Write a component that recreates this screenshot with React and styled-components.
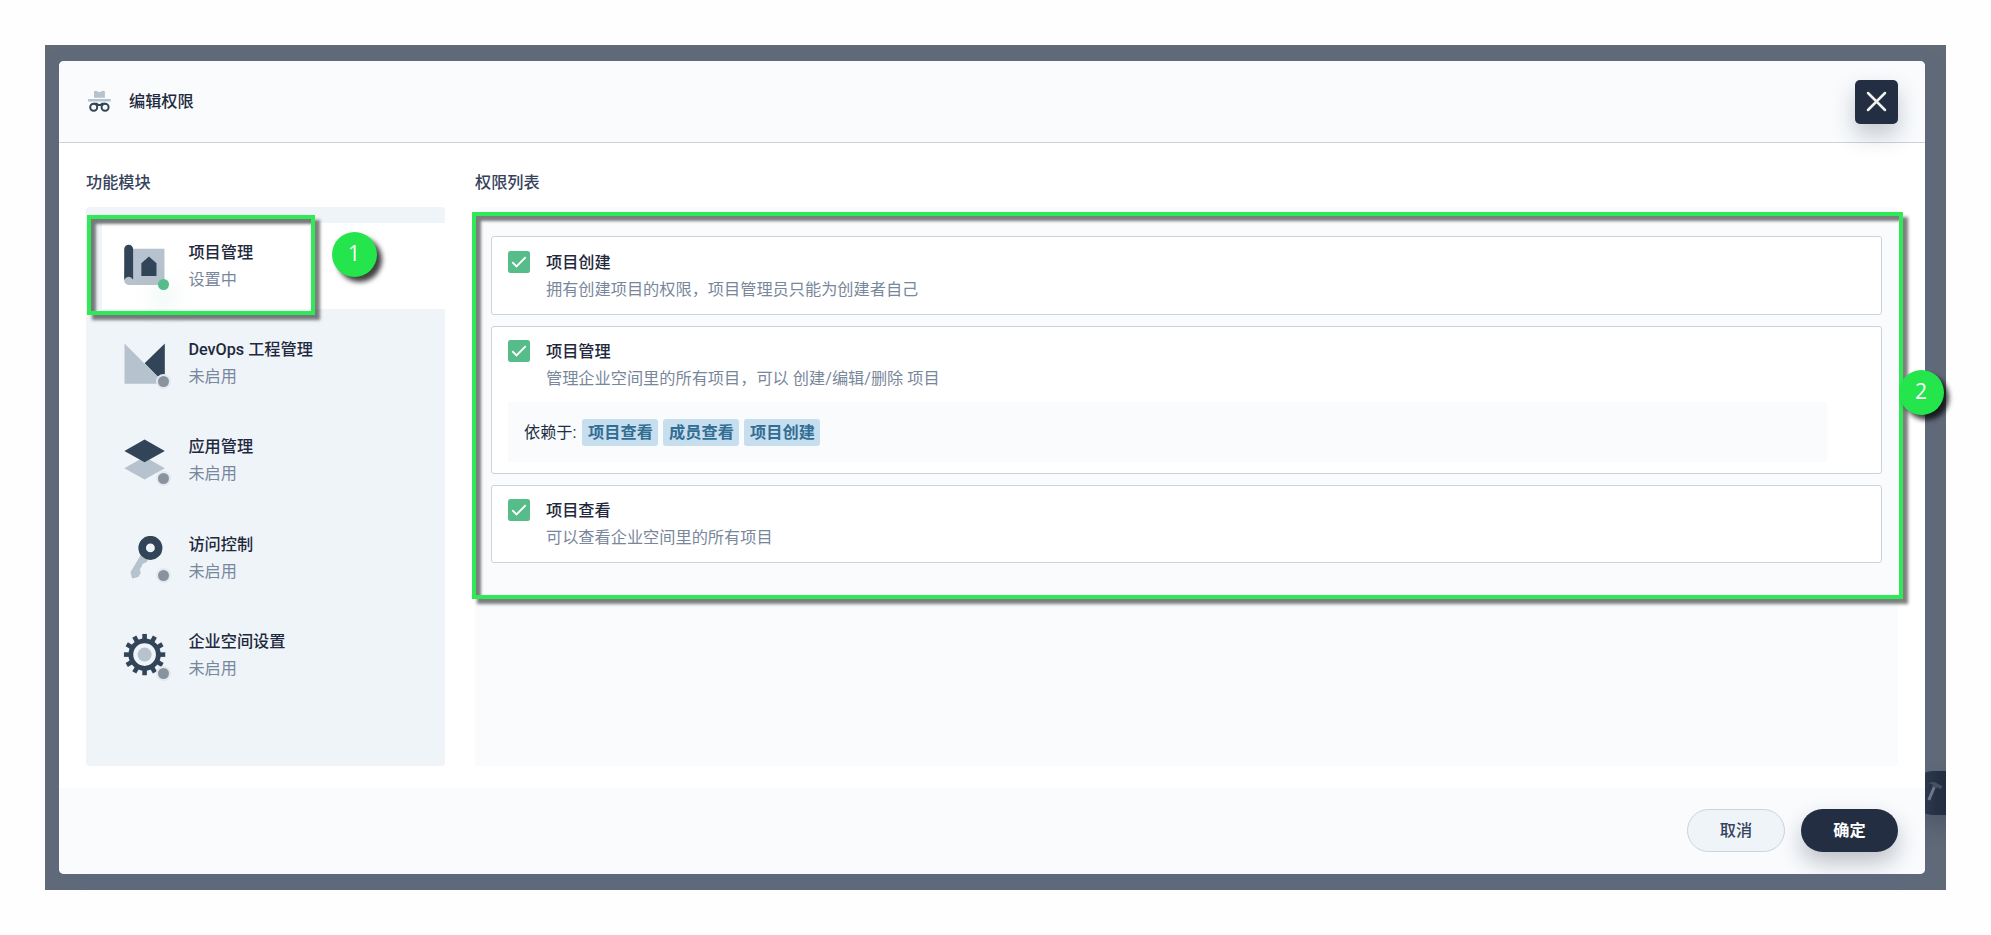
import React from "react";
import styled, { createGlobalStyle } from "styled-components";

const GlobalStyle = createGlobalStyle`
  *, *::before, *::after { box-sizing: border-box; }
  body {
    margin: 0;
    background: #fefefe;
    color: #242e42;
    font-family: Roboto, "Noto Sans CJK SC", sans-serif;
    font-size: 16.2px;
    line-height: 27px;
  }
`;

const DARK = "#324558";
const LIGHT = "#b6c2cd";

const Page = styled.main`
  position: relative;
  width: 1991px;
  height: 935px;
  padding: 45px;
  overflow: hidden;
`;

const Backdrop = styled.div`
  position: relative;
  width: 1901px;
  height: 845px;
  padding: 16px 21px 16px 14px;
  background: #616a78;
  overflow: hidden;
`;

const Modal = styled.section`
  position: relative;
  display: flex;
  flex-direction: column;
  width: 100%;
  height: 100%;
  border-radius: 5px;
  background: #fff;
  box-shadow: 0 11px 22px rgba(88, 102, 134, 0.4);
  overflow: hidden;
`;

const Header = styled.header`
  display: flex;
  align-items: center;
  flex: 0 0 82px;
  padding: 0 27px;
  background: #f9fbfd;
  border-bottom: 1px solid #ccd3db;
`;

const HeaderIcon = styled.svg`
  width: 27px;
  height: 27px;
  margin-right: 16px;
`;

const HeaderTitle = styled.h1`
  flex: 1;
  margin: 0;
  font-size: 16.2px;
  font-weight: 500;
  color: #1f293d;
`;

const CloseButton = styled.button`
  display: flex;
  align-items: center;
  justify-content: center;
  width: 43px;
  height: 44px;
  padding: 0;
  border: 0;
  border-radius: 5px;
  background: #242e42;
  box-shadow: 0 11px 22px rgba(36, 46, 66, 0.25);
`;

const Content = styled.div`
  display: flex;
  flex: 1;
  gap: 30px;
  padding: 26px 27px 22px;
`;

const Column = styled.div`
  display: flex;
  flex-direction: column;
  flex: ${(p) => (p.$width ? `0 0 ${p.$width}px` : "1")};
`;

const ColumnTitle = styled.h2`
  margin: 0 0 11px;
  font-size: 16.2px;
  font-weight: 500;
  color: #36435c;
`;

const ModuleList = styled.nav`
  display: flex;
  flex-direction: column;
  flex: 1;
  gap: 10.8px;
  padding: 15.8px 0 0 16px;
  border-radius: 4px;
  background: #eff4f9;
`;

const ModuleItem = styled.div`
  display: flex;
  align-items: center;
  height: 86.4px;
  padding-left: 21.3px;
  background: ${(p) => (p.$active ? "#fff" : "transparent")};
`;

const ModuleIcon = styled.div`
  position: relative;
  width: 43.2px;
  height: 43.2px;
  margin-right: 21.9px;

  svg { display: block; width: 100%; height: 100%; }
`;

const StatusDot = styled.i`
  position: absolute;
  left: 35px;
  top: 34.4px;
  width: 11px;
  height: 11px;
  border-radius: 50%;
  background: ${(p) => (p.$active ? "#55bc8a" : "#88939e")};
  box-shadow: ${(p) =>
    p.$active ? "0 11px 22px rgba(85, 188, 138, 0.5)" : "0 0 0 2px #e3e9ef"};
`;

const Name = styled.div`
  font-weight: 500;
  color: #1f293d;
`;

const Note = styled.div`
  color: #79879c;
  font-weight: 400;
`;

const PermissionPanel = styled.div`
  display: flex;
  flex-direction: column;
  flex: 1;
  gap: 11px;
  padding: 29px 16px;
  border-radius: 4px;
  background: #f9fbfd;
`;

const Card = styled.article`
  height: ${(p) => p.$height}px;
  padding: ${(p) => p.$top}px 54px 0 16px;
  border: 1px solid #ccd3db;
  border-radius: 3px;
  background: #fff;
`;

const CardRow = styled.div`
  display: flex;
  gap: 16px;
`;

const Checkbox = styled.span`
  display: flex;
  flex: 0 0 22px;
  height: 22px;
  align-items: center;
  justify-content: center;
  border-radius: 2.5px;
  background: #55bc8a;
`;

const CardText = styled.div`
  margin: -2px 0 -1px;
`;

const Dependencies = styled.div`
  display: flex;
  align-items: center;
  gap: 5px;
  height: 60px;
  margin-top: 11px;
  padding-left: 16px;
  background: #f9fbfd;
`;

const DependencyLabel = styled.span`
  margin-right: 1px;
`;

const Tag = styled.span`
  width: 76px;
  height: 27px;
  border-radius: 3px;
  background: #c7deef;
  color: #326e93;
  font-weight: 700;
  text-align: center;
`;

const Footer = styled.footer`
  display: flex;
  justify-content: flex-end;
  gap: 16px;
  flex: 0 0 86px;
  padding: 21px 27px 0;
  background: #f9fbfd;
`;

const Button = styled.button`
  width: ${(p) => (p.$primary ? 97 : 98)}px;
  height: 43px;
  padding: 0;
  border: ${(p) => (p.$primary ? "0" : "1px solid #ccd3db")};
  border-radius: 22px;
  background: ${(p) => (p.$primary ? "#242e42" : "#eff4f9")};
  color: ${(p) => (p.$primary ? "#fff" : "#36435c")};
  box-shadow: ${(p) => (p.$primary ? "0 11px 22px rgba(36, 46, 66, 0.28)" : "none")};
  font: inherit;
  font-weight: ${(p) => (p.$primary ? 700 : 500)};
`;

const ToolboxButton = styled.div`
  position: absolute;
  left: 1866px;
  top: 726px;
  width: 70px;
  height: 44px;
  padding: 9px 0 0 15px;
  border-radius: 22px;
  background: #242e42;
  box-shadow: 0 11px 22px rgba(36, 46, 66, 0.3);
`;

const Highlight = styled.div`
  position: absolute;
  left: ${(p) => p.$x}px;
  top: ${(p) => p.$y}px;
  width: ${(p) => p.$w}px;
  height: ${(p) => p.$h}px;
  border: 4px solid #2fe957;
  box-shadow:
    5px 5px 3px rgba(0, 0, 0, 0.5),
    inset 5px 5px 3px rgba(0, 0, 0, 0.5);
  pointer-events: none;
`;

const Marker = styled.div`
  position: absolute;
  left: ${(p) => p.$x}px;
  top: ${(p) => p.$y}px;
  width: 45px;
  height: 45px;
  border-radius: 50%;
  background: #24e54c;
  box-shadow: 5px 5px 5px rgba(0, 0, 0, 0.75);
  color: #fff;
  font: 400 21px/43px "Open Sans", "Noto Sans", sans-serif;
  text-align: center;
`;

const ProjectIcon = () => (
  <svg viewBox="0 0 32 32">
    <path fill={LIGHT} d="M4 3.6H30.7V30.3H4.2A3.3 3.3 0 0 1 .9 27V20z" />
    <path fill={DARK} d="M.9 3.8a3.3 3.3 0 0 1 6.6 0V26.4Q6.2 24.2 4.2 24.2T.9 26.4z" />
    <path fill={DARK} d="M19.2 9.2l5.6 5.1v9.4H13.6v-9.4z" />
  </svg>
);

const DevOpsIcon = () => (
  <svg viewBox="0 0 32 32">
    <path fill={DARK} d="M31 1.1V31L16 15.7z" />
    <path fill={LIGHT} d="M1.1 1.1L30.8 30.9H1.1z" />
  </svg>
);

const AppIcon = () => (
  <svg viewBox="0 0 32 32">
    <path fill={LIGHT} d="M16 13.2l15 8.4-15 8.4-15-8.4z" />
    <path fill={DARK} d="M16 .4l15 8.4-15 8.5L1 8.8z" />
  </svg>
);

const KeyIcon = () => (
  <svg viewBox="0 0 32 32">
    <path
      fill={LIGHT}
      d="M13.2 14L5.6 26.6L6.7 31.4L11.3 30.3L13.1 27.6L12.5 24.4L14 22.3L14.4 20.8L17.6 19.2L19.5 16z"
    />
    <circle cx="20.3" cy="8.8" r="6.1" fill="none" stroke={DARK} strokeWidth="5.6" />
  </svg>
);

const GearIcon = () => (
  <svg viewBox="0 0 32 32">
    {Array.from({ length: 12 }, (_, i) => (
      <rect
        key={i}
        x="14.3"
        y=".7"
        width="3.4"
        height="5"
        fill={DARK}
        transform={`rotate(${i * 30} 16 16)`}
      />
    ))}
    <circle cx="16" cy="16" r="10.2" fill="none" stroke={DARK} strokeWidth="3.6" />
    <circle cx="16" cy="16" r="5.2" fill={LIGHT} />
  </svg>
);

const modules = [
  { name: "项目管理", status: "设置中", Icon: ProjectIcon, active: true },
  { name: "DevOps 工程管理", status: "未启用", Icon: DevOpsIcon },
  { name: "应用管理", status: "未启用", Icon: AppIcon },
  { name: "访问控制", status: "未启用", Icon: KeyIcon },
  { name: "企业空间设置", status: "未启用", Icon: GearIcon },
];

const permissions = [
  { name: "项目创建", note: "拥有创建项目的权限，项目管理员只能为创建者自己", height: 79, top: 14 },
  {
    name: "项目管理",
    note: "管理企业空间里的所有项目，可以 创建/编辑/删除 项目",
    height: 148,
    top: 13,
    deps: ["项目查看", "成员查看", "项目创建"],
  },
  { name: "项目查看", note: "可以查看企业空间里的所有项目", height: 78, top: 13 },
];

export default function App() {
  return (
    <Page>
      <GlobalStyle />
      <Backdrop>
        <ToolboxButton>
          <svg width="18" height="24" viewBox="0 0 18 24">
            <path d="M8.5 6.5L2.8 20" stroke="#717c88" strokeWidth="3" />
            <path
              d="M2.6 3.4Q7 .6 10.8 3.2L16.4 6.2L14.4 9.2L11.6 7.6L9.6 8.3L6.4 6.4L6.6 4z"
              fill="#455162"
            />
          </svg>
        </ToolboxButton>
        <Modal>
          <Header>
            <HeaderIcon viewBox="0 0 27 27">
              <path fill={LIGHT} d="M8 3.2l2-.4 3.3 1.4 3.6-1.4 2 .4v6.6H8zM2 11h22.7v2.5H2z" />
              <g fill="none" stroke={DARK} strokeWidth="2">
                <circle cx="7.7" cy="19.2" r="3.5" />
                <circle cx="19.1" cy="19.2" r="3.5" />
                <path d="M7.7 15.7h3L12.4 17h2l1.7-1.3h3" />
              </g>
            </HeaderIcon>
            <HeaderTitle>编辑权限</HeaderTitle>
            <CloseButton aria-label="关闭">
              <svg width="21" height="21" viewBox="0 0 21 21">
                <path
                  d="M2 2l17 17M19 2L2 19"
                  stroke="#eef1ee"
                  strokeWidth="2.5"
                  strokeLinecap="round"
                />
              </svg>
            </CloseButton>
          </Header>
          <Content>
            <Column $width={359}>
              <ColumnTitle>功能模块</ColumnTitle>
              <ModuleList>
                {modules.map(({ name, status, Icon, active }) => (
                  <ModuleItem key={name} $active={active}>
                    <ModuleIcon>
                      <Icon />
                      <StatusDot $active={active} />
                    </ModuleIcon>
                    <div>
                      <Name>{name}</Name>
                      <Note>{status}</Note>
                    </div>
                  </ModuleItem>
                ))}
              </ModuleList>
            </Column>
            <Column>
              <ColumnTitle>权限列表</ColumnTitle>
              <PermissionPanel>
                {permissions.map((p) => (
                  <Card key={p.name} $height={p.height} $top={p.top}>
                    <CardRow>
                      <Checkbox>
                        <svg width="16" height="16" viewBox="0 0 16 16">
                          <path d="M1.3 8.2l4.2 4.3 9.2-9.3" fill="none" stroke="#fff" strokeWidth="1.9" />
                        </svg>
                      </Checkbox>
                      <CardText>
                        <Name>{p.name}</Name>
                        <Note>{p.note}</Note>
                      </CardText>
                    </CardRow>
                    {p.deps && (
                      <Dependencies>
                        <DependencyLabel>依赖于:</DependencyLabel>
                        {p.deps.map((d) => (
                          <Tag key={d}>{d}</Tag>
                        ))}
                      </Dependencies>
                    )}
                  </Card>
                ))}
              </PermissionPanel>
            </Column>
          </Content>
          <Footer>
            <Button>取消</Button>
            <Button $primary>确定</Button>
          </Footer>
        </Modal>
      </Backdrop>
      <Highlight $x={87} $y={215} $w={228} $h={100} />
      <Highlight $x={472} $y={212} $w={1431} $h={387} />
      <Marker $x={331.5} $y={232.4}>1</Marker>
      <Marker $x={1898.5} $y={370.4}>2</Marker>
    </Page>
  );
}
